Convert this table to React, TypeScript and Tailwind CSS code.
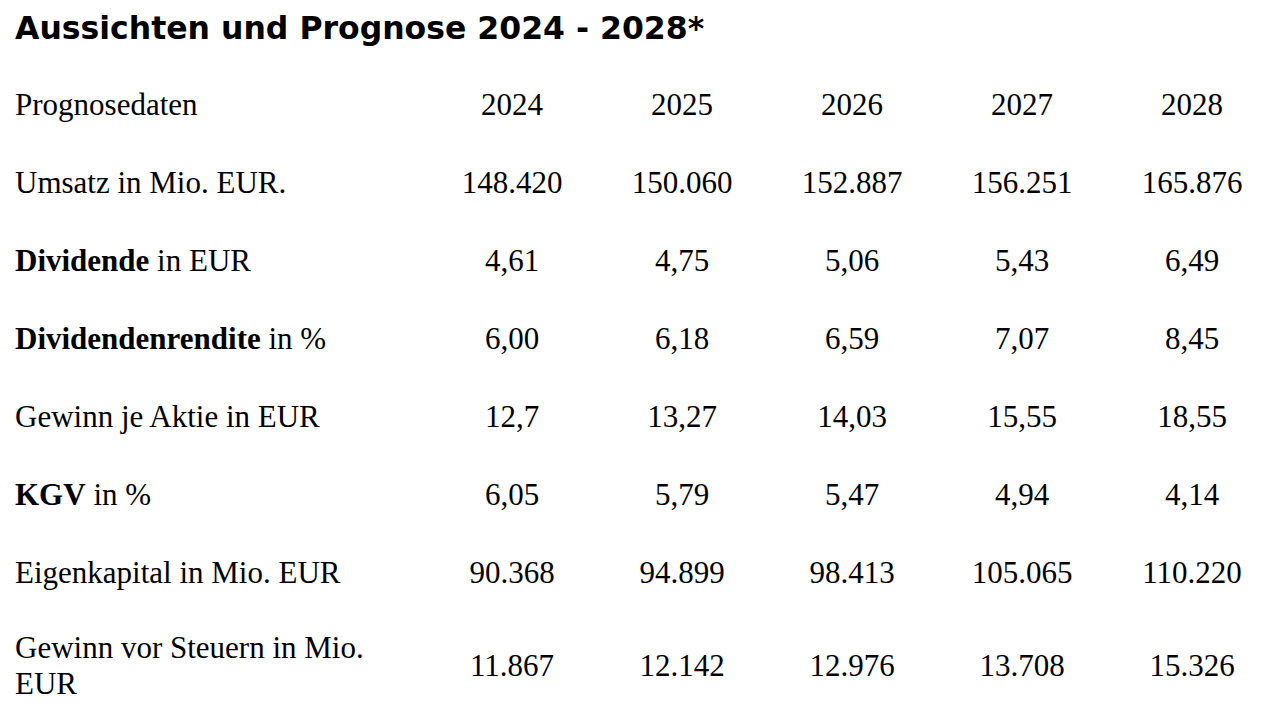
const rows: { label: React.ReactNode; values: string[] }[] = [
  { label: 'Prognosedaten', values: ['2024', '2025', '2026', '2027', '2028'] },
  { label: 'Umsatz in Mio. EUR.', values: ['148.420', '150.060', '152.887', '156.251', '165.876'] },
  { label: <><b>Dividende</b> in EUR</>, values: ['4,61', '4,75', '5,06', '5,43', '6,49'] },
  { label: <><b>Dividendenrendite</b> in %</>, values: ['6,00', '6,18', '6,59', '7,07', '8,45'] },
  { label: 'Gewinn je Aktie in EUR', values: ['12,7', '13,27', '14,03', '15,55', '18,55'] },
  { label: <><b>KGV</b> in %</>, values: ['6,05', '5,79', '5,47', '4,94', '4,14'] },
  { label: 'Eigenkapital in Mio. EUR', values: ['90.368', '94.899', '98.413', '105.065', '110.220'] },
  { label: 'Gewinn vor Steuern in Mio. EUR', values: ['11.867', '12.142', '12.976', '13.708', '15.326'] },
];

export default function App() {
  return (
    <div className="min-h-screen bg-white text-black">
      <h2 className="px-[15px] pt-[10px] text-[31.5px] leading-[36px] font-bold font-['DejaVu_Sans',Verdana,sans-serif]">
        Aussichten und Prognose 2024 - 2028*
      </h2>
      <div className="mt-[20px] grid grid-cols-[427px_repeat(5,170px)] font-['Liberation_Serif','Times_New_Roman',serif] text-[31px] leading-[36px]">
        {rows.map((row, i) => {
          const last = i === rows.length - 1;
          return (
            <div key={i} className="contents">
              <div className={`${last ? 'pt-[18px] pb-[21px]' : 'py-[21px]'} pl-[15px] pr-[20px]`}>{row.label}</div>
              {row.values.map((v, j) => (
                <div
                  key={j}
                  className={`flex items-center justify-center ${last ? 'pt-[18px] pb-[21px]' : 'py-[21px]'}`}
                >
                  {v}
                </div>
              ))}
            </div>
          );
        })}
      </div>
    </div>
  );
}
